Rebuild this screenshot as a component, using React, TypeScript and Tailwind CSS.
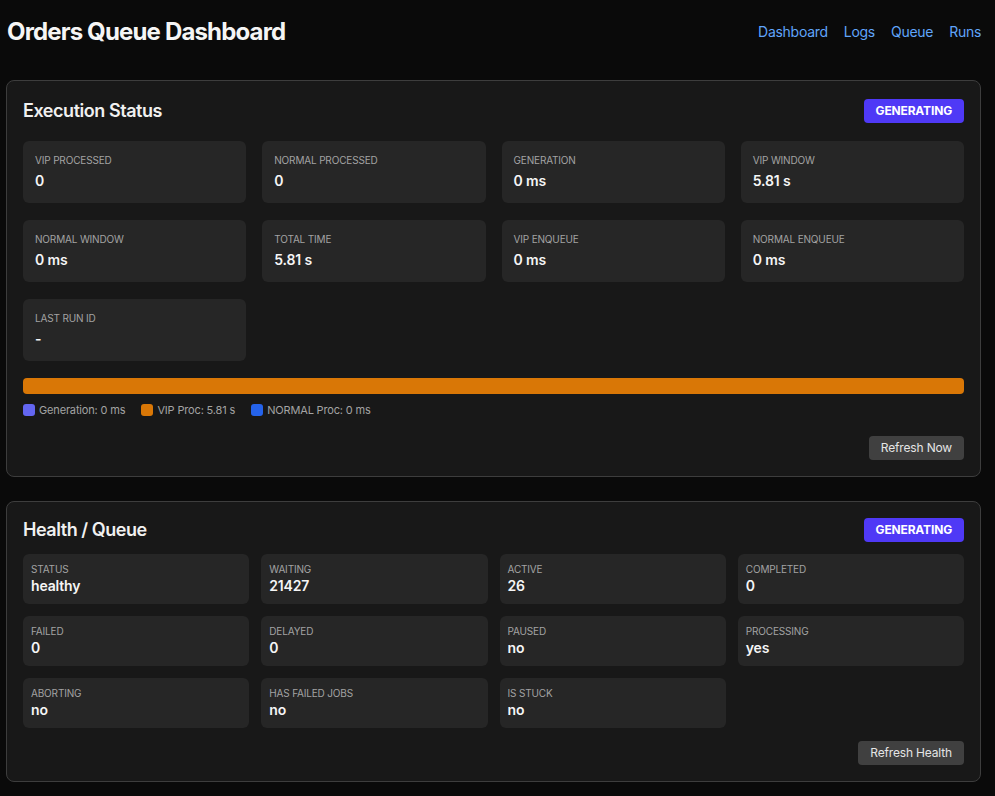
const execStats = [
  { label: 'VIP Processed', value: '0' },
  { label: 'Normal Processed', value: '0' },
  { label: 'Generation', value: '0 ms' },
  { label: 'VIP Window', value: '5.81 s' },
  { label: 'Normal Window', value: '0 ms' },
  { label: 'Total Time', value: '5.81 s' },
  { label: 'VIP Enqueue', value: '0 ms' },
  { label: 'Normal Enqueue', value: '0 ms' },
  { label: 'Last Run ID', value: '-' },
];

const healthStats = [
  { label: 'Status', value: 'healthy' },
  { label: 'Waiting', value: '21427' },
  { label: 'Active', value: '26' },
  { label: 'Completed', value: '0' },
  { label: 'Failed', value: '0' },
  { label: 'Delayed', value: '0' },
  { label: 'Paused', value: 'no' },
  { label: 'Processing', value: 'yes' },
  { label: 'Aborting', value: 'no' },
  { label: 'Has Failed Jobs', value: 'no' },
  { label: 'Is Stuck', value: 'no' },
];

const legend = [
  { color: 'bg-[#6366f1]', text: 'Generation: 0 ms' },
  { color: 'bg-[#d97706]', text: 'VIP Proc: 5.81 s' },
  { color: 'bg-[#2563eb]', text: 'NORMAL Proc: 0 ms' },
];

function Badge() {
  return (
    <span className="h-6 px-3 flex items-center rounded bg-[#4f39f6] text-white text-xs font-bold">
      GENERATING
    </span>
  );
}

function PanelHeader({ title }: { title: string }) {
  return (
    <div className="flex items-center justify-between h-6">
      <h2 className="text-lg font-semibold text-[#f0f0f0] tracking-tight">{title}</h2>
      <Badge />
    </div>
  );
}

export default function App() {
  return (
    <div className="min-h-screen bg-[#0a0a0a] pl-[6px] pr-[14px] pt-4 pb-6 text-white tracking-[-0.01em]" style={{ fontFamily: 'Inter, "Liberation Sans", sans-serif' }}>
      {/* Top bar */}
      <header className="flex items-center justify-between h-8 mb-8">
        <h1 className="pl-px text-2xl font-bold tracking-[-0.035em] text-[#f5f5f5]">Orders Queue Dashboard</h1>
        <nav className="flex items-center gap-4 text-sm text-[#60a5fa] tracking-[-0.02em]">
          <a href="#">Dashboard</a>
          <a href="#">Logs</a>
          <a href="#">Queue</a>
          <a href="#">Runs</a>
        </nav>
      </header>

      {/* Execution Status */}
      <section className="rounded-lg border border-[#3d3d3d] bg-[#181818] p-4">
        <div className="pt-0.5">
          <PanelHeader title="Execution Status" />
        </div>
        <div className="mt-[18px] grid grid-cols-4 gap-4 gap-y-[17px]">
          {execStats.map((s) => (
            <div key={s.label} className="h-[62px] rounded-md bg-[#262626] px-3 pt-3">
              <div className="text-[10px] leading-[14px] uppercase text-[#a3a3a3]">{s.label}</div>
              <div className="mt-1 text-sm leading-5 font-semibold text-[#f5f5f5]">{s.value}</div>
            </div>
          ))}
        </div>
        <div className="mt-[17px] h-4 rounded bg-[#d97706]" />
        <div className="mt-2 flex items-center gap-4 text-[11px] leading-4 text-[#a3a3a3]">
          {legend.map((l) => (
            <div key={l.text} className="flex items-center gap-1">
              <span className={`w-3 h-3 rounded-[3px] ${l.color}`} />
              <span>{l.text}</span>
            </div>
          ))}
        </div>
        <div className="mt-[18px] flex justify-end">
          <button className="h-6 px-3 rounded bg-[#404040] text-xs text-[#e5e5e5]">Refresh Now</button>
        </div>
      </section>

      {/* Health / Queue */}
      <section className="mt-6 rounded-lg border border-[#3d3d3d] bg-[#181818] p-4">
        <PanelHeader title="Health / Queue" />
        <div className="mt-3 grid grid-cols-4 gap-3">
          {healthStats.map((s) => (
            <div key={s.label} className="rounded-md bg-[#262626] p-2">
              <div className="text-[10px] leading-[14px] uppercase text-[#a3a3a3]">{s.label}</div>
              <div className="text-sm leading-5 font-semibold text-[#f5f5f5]">{s.value}</div>
            </div>
          ))}
        </div>
        <div className="mt-[13px] flex justify-end">
          <button className="h-6 px-3 rounded bg-[#404040] text-xs text-[#e5e5e5]">Refresh Health</button>
        </div>
      </section>
    </div>
  );
}
